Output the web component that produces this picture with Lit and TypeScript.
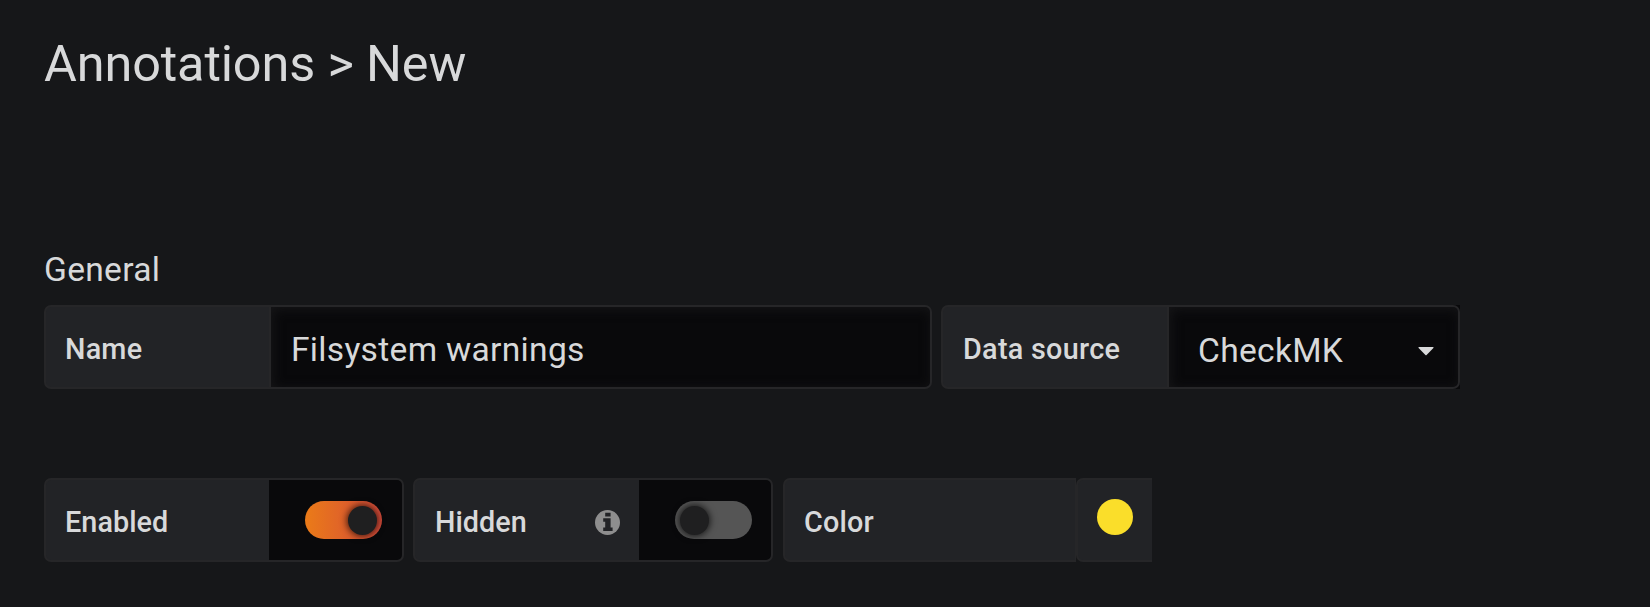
import { LitElement, html, css } from "lit";
import { customElement, property } from "lit/decorators.js";

@customElement("toggle-switch")
class ToggleSwitch extends LitElement {
  @property({ type: Boolean, reflect: true }) checked = false;

  static styles = css`
    :host {
      box-sizing: border-box;
      display: flex;
      width: 135px;
      height: 84px;
      padding: 21px 0 0 36px;
      background: #09090b;
      border: 2px solid #262628;
      border-left: 0;
      border-radius: 0 7px 7px 0;
    }
    .track {
      box-sizing: border-box;
      display: flex;
      width: 77px;
      height: 38px;
      padding: 5px 5px 5px 4.5px;
      border-radius: 19px;
      background: #555555;
    }
    .knob {
      width: 29px;
      height: 29px;
      border-radius: 50%;
      background: #1f1f20;
      box-shadow: 0 0 7px 1px rgba(0, 0, 0, 0.75);
    }
    :host([checked]) .track {
      justify-content: flex-end;
      background: linear-gradient(90deg, #eb7b18, #d44a3a);
    }
  `;

  render() {
    return html`<div class="track"><div class="knob"></div></div>`;
  }
}

@customElement("app-root")
class AppRoot extends LitElement {
  static styles = css`
    :host {
      box-sizing: border-box;
      display: block;
      height: 607px;
      padding: 34px 44px 0;
      overflow: hidden;
      background: #161719;
      color: #d8d9da;
      font-family: Roboto, sans-serif;
    }
    h1 {
      margin: 0;
      font-size: 50.4px;
      line-height: 60px;
      font-weight: 400;
      letter-spacing: -0.13px;
    }
    h2 {
      margin: 156px 0 15px;
      font-size: 33.6px;
      line-height: 40px;
      font-weight: 400;
      letter-spacing: 0.3px;
    }
    .row {
      display: flex;
      height: 84px;
    }
    .row + .row {
      margin-top: 89px;
    }
    .label,
    .input,
    .select,
    .swatch {
      box-sizing: border-box;
      height: 84px;
      display: flex;
      align-items: center;
      border: 2px solid #262628;
    }
    .label {
      justify-content: space-between;
      width: 227px;
      padding: 4px 17px 0 19px;
      background: #222326;
      border-radius: 7px 0 0 7px;
      font-size: 28.8px;
      font-weight: 500;
      letter-spacing: 0.2px;
    }
    .row .flush {
      width: 225px;
      border-right: 0;
      letter-spacing: 0.05px;
    }
    .row .hidden {
      width: 226px;
      border-right: 0;
      padding-left: 20px;
      padding-right: 19px;
      letter-spacing: 0;
    }
    .input,
    .select {
      background: #09090b;
      border-left: 0;
      border-radius: 0 7px 7px 0;
      box-shadow: inset 2px 2px 12px #161618;
      font-size: 33.6px;
      letter-spacing: 0.3px;
    }
    .input {
      width: 661px;
      padding: 4px 20px 0;
      margin-right: 9px;
    }
    .label.source {
      width: 228px;
      padding-left: 20px;
      letter-spacing: 0.28px;
    }
    .select-box {
      background: #09090b;
    }
    .select {
      width: 291px;
      justify-content: space-between;
      padding: 6px 24px 0 29px;
    }
    .caret {
      width: 16px;
      height: 9px;
      margin-top: 3px;
      fill: #d8d9da;
    }
    toggle-switch {
      margin-right: 9px;
    }
    .hidden-switch {
      width: 134px;
      margin-right: 10px;
    }
    .info {
      width: 25px;
      height: 25px;
    }
    .label.color {
      width: 293px;
      border-right-width: 1px;
    }
    .swatch {
      width: 76px;
      padding: 0 0 7px 19px;
      background: #222326;
      border-right: 0;
      border-radius: 7px 0 0 7px;
    }
    .dot {
      width: 36px;
      height: 36px;
      border-radius: 50%;
      background: #fade2a;
    }
  `;

  render() {
    return html`
      <h1>Annotations &gt; New</h1>
      <h2>General</h2>
      <div class="row">
        <div class="label">Name</div>
        <div class="input">Filsystem warnings</div>
        <div class="label source">Data source</div>
        <div class="select-box">
          <div class="select">
            <span>CheckMK</span>
            <svg class="caret" viewBox="0 0 16 9"><path d="M1 0h14q1 0 .4 1L8.6 8q-.6.7-1.2 0L.6 1Q0 0 1 0z" /></svg>
          </div>
        </div>
      </div>
      <div class="row">
        <div class="label flush">Enabled</div>
        <toggle-switch checked></toggle-switch>
        <div class="label hidden">
          Hidden
          <svg class="info" viewBox="0 0 25 25">
            <circle cx="12.5" cy="12.5" r="12.5" fill="#8e8e8e" />
            <path d="M10.2 2.8h5.4v3.7h-5.4zM8.2 8.3h7.4v9.2h2V21H8.2v-3.5h2v-5.7h-2z" fill="#222326" />
          </svg>
        </div>
        <toggle-switch class="hidden-switch"></toggle-switch>
        <div class="label color">Color</div>
        <div class="swatch"><div class="dot"></div></div>
      </div>
    `;
  }
}
